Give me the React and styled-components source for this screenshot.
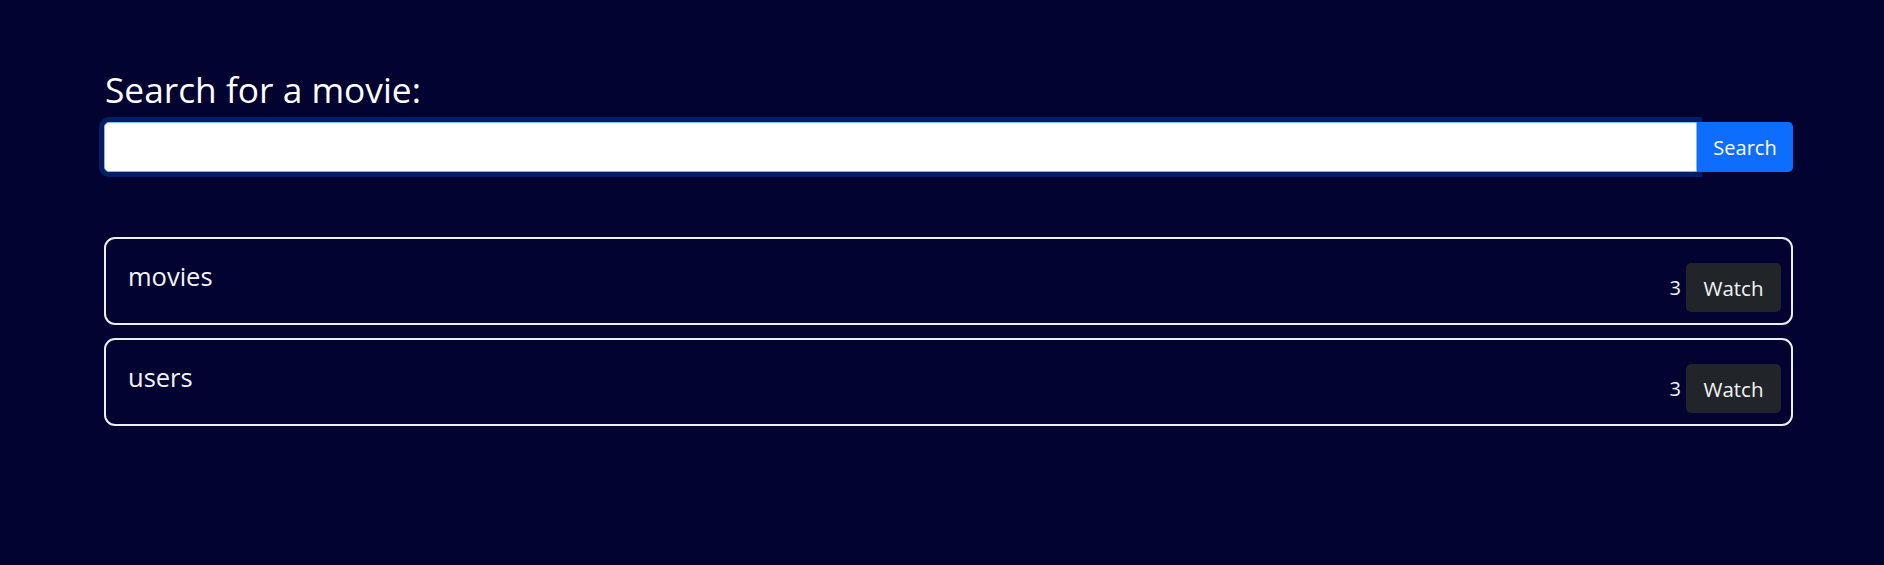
import React from 'react';
import styled, { createGlobalStyle } from 'styled-components';

const GlobalStyle = createGlobalStyle`
  html, body {
    margin: 0;
    padding: 0;
    background: #020331;
  }

  body {
    font-family: "Open Sans", "Noto Sans", sans-serif;
    color: #ffffff;
  }
`;

const Page = styled.main`
  min-height: 565px;
  box-sizing: border-box;
  padding: 68px 0 0 104px;
  width: 1793px;
`;

const Title = styled.h2`
  margin: 0 0 12px;
  padding-left: 1px;
  font-size: 35.3px;
  font-weight: 400;
  line-height: 42px;
  color: #ffffff;
`;

const SearchBar = styled.form`
  display: flex;
  height: 50px;
  margin-bottom: 65px;
`;

const SearchInput = styled.input`
  flex: 1;
  box-sizing: border-box;
  height: 50px;
  border: 1px solid #86b7fe;
  border-radius: 5px 0 0 5px;
  background: #ffffff;
  box-shadow: 0 0 0 5px rgba(13, 110, 253, 0.25);
  outline: none;
  font: inherit;
  font-size: 20px;
  padding: 0 16px;
`;

const SearchButton = styled.button`
  width: 96px;
  height: 50px;
  border: none;
  border-radius: 0 5px 5px 0;
  background: #0d6efd;
  color: #ffffff;
  font-family: inherit;
  font-size: 20px;
  cursor: pointer;
`;

const List = styled.ul`
  all: unset;
  display: flex;
  flex-direction: column;
  gap: 13px;
`;

const Card = styled.li`
  list-style: none;
  box-sizing: border-box;
  height: 88px;
  border: 2px solid #eceef6;
  border-radius: 11px;
  padding: 19px 10px 11px 22px;
  display: flex;
  justify-content: space-between;
`;

const Name = styled.span`
  align-self: flex-start;
  font-size: 25.5px;
  line-height: 37px;
  color: #f4f4f8;
`;

const Actions = styled.div`
  align-self: flex-end;
  display: flex;
  align-items: center;
  gap: 5px;
`;

const Count = styled.span`
  font-size: 20px;
  color: #f4f4f8;
`;

const WatchButton = styled.button`
  width: 95px;
  height: 49px;
  border: none;
  border-radius: 5px;
  background: #212529;
  color: #f4f4f4;
  font-family: inherit;
  font-size: 20.5px;
  cursor: pointer;
`;

const collections = [
  { name: 'movies', count: 3 },
  { name: 'users', count: 3 },
];

const App = () => (
  <>
    <GlobalStyle />
    <Page>
      <Title>Search for a movie:</Title>
      <SearchBar onSubmit={(e) => e.preventDefault()}>
        <SearchInput type="text" />
        <SearchButton type="submit">Search</SearchButton>
      </SearchBar>
      <List>
        {collections.map((c) => (
          <Card key={c.name}>
            <Name>{c.name}</Name>
            <Actions>
              <Count>{c.count}</Count>
              <WatchButton>Watch</WatchButton>
            </Actions>
          </Card>
        ))}
      </List>
    </Page>
  </>
);

export default App;
